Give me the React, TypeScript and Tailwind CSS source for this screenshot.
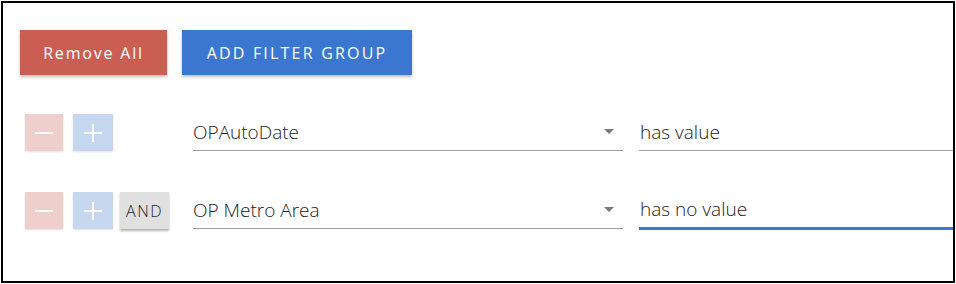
import React from 'react';

// Filter builder panel

type Row = { field: string; op: string; joiner?: string; focused?: boolean };

const rows: Row[] = [
  { field: 'OPAutoDate', op: 'has value' },
  { field: 'OP Metro Area', op: 'has no value', joiner: 'AND', focused: true },
];

const MinusIcon = () => (
  <svg width="18" height="18" viewBox="0 0 18 18">
    <rect x="0" y="8" width="18" height="2" fill="white" />
  </svg>
);

const PlusIcon = () => (
  <svg width="18" height="18" viewBox="0 0 18 18">
    <rect x="0" y="8" width="18" height="2" fill="white" />
    <rect x="8" y="0" width="2" height="18" fill="white" />
  </svg>
);

const FilterRow: React.FC<{ row: Row }> = ({ row }) => (
  <div className="flex items-start h-[38px] pl-[5px]">
    <button className="shrink-0 w-[38px] h-[37px] flex items-center justify-center bg-[#eecfcc] shadow-[0_1px_2px_rgba(0,0,0,0.12)]">
      <MinusIcon />
    </button>
    <button className="shrink-0 ml-[10px] w-[40px] h-[37px] flex items-center justify-center bg-[#c6d7f0] shadow-[0_1px_2px_rgba(0,0,0,0.12)]">
      <PlusIcon />
    </button>
    {row.joiner ? (
      <div className="shrink-0 ml-[7px] w-[49px] h-[37px] flex items-center justify-center bg-[#e0e0e0] text-[16px] tracking-[1.5px] text-[#222] shadow-[0_2px_2px_rgba(0,0,0,0.3)]">
        {row.joiner}
      </div>
    ) : (
      <div className="shrink-0 ml-[7px] w-[49px]" />
    )}

    <div className="shrink-0 ml-[24px] w-[430px] h-[37px] relative border-b border-[#9e9e9e] flex items-center">
      <span className="text-[19px] text-[#222]">{row.field}</span>
      <span className="absolute right-[9px] top-[15px] w-0 h-0 border-l-[5px] border-r-[5px] border-t-[5px] border-l-transparent border-r-transparent border-t-[#7a7a7a]" />
    </div>

    <div
      className={
        row.focused
          ? 'shrink-0 ml-[16px] w-[330px] h-[38px] border-b-[3px] border-[#3b78d3] flex items-center'
          : 'shrink-0 ml-[16px] w-[330px] h-[37px] border-b border-[#9e9e9e] flex items-center'
      }
    >
      <span className="pl-px text-[19px] text-[#222]">{row.op}</span>
    </div>
  </div>
);

const App: React.FC = () => {
  return (
    <div className="w-[956px] h-[284px] bg-white">
      <div className="m-px w-[954px] h-[282px] border-2 border-black bg-white overflow-hidden font-['Open_Sans',sans-serif] font-[350]">
        <div className="pl-[17px] pt-[27px]">
          {/* Actions */}
          <div className="flex gap-[15px]">
            <button className="shrink-0 w-[147px] h-[45px] bg-[#cb5e53] text-white text-[16px] font-normal tracking-[1.8px] shadow-[0_2px_3px_rgba(0,0,0,0.25)]">
              Remove All
            </button>
            <button className="shrink-0 w-[230px] h-[45px] bg-[#3b77d0] text-white text-[16px] font-normal tracking-[2.2px] shadow-[0_2px_3px_rgba(0,0,0,0.25)]">
              ADD FILTER GROUP
            </button>
          </div>

          {/* Filter rows */}
          <div className="mt-[39px] flex flex-col gap-[40px]">
            {rows.map((r) => (
              <FilterRow key={r.field} row={r} />
            ))}
          </div>
        </div>
      </div>
    </div>
  );
};

export default App;
